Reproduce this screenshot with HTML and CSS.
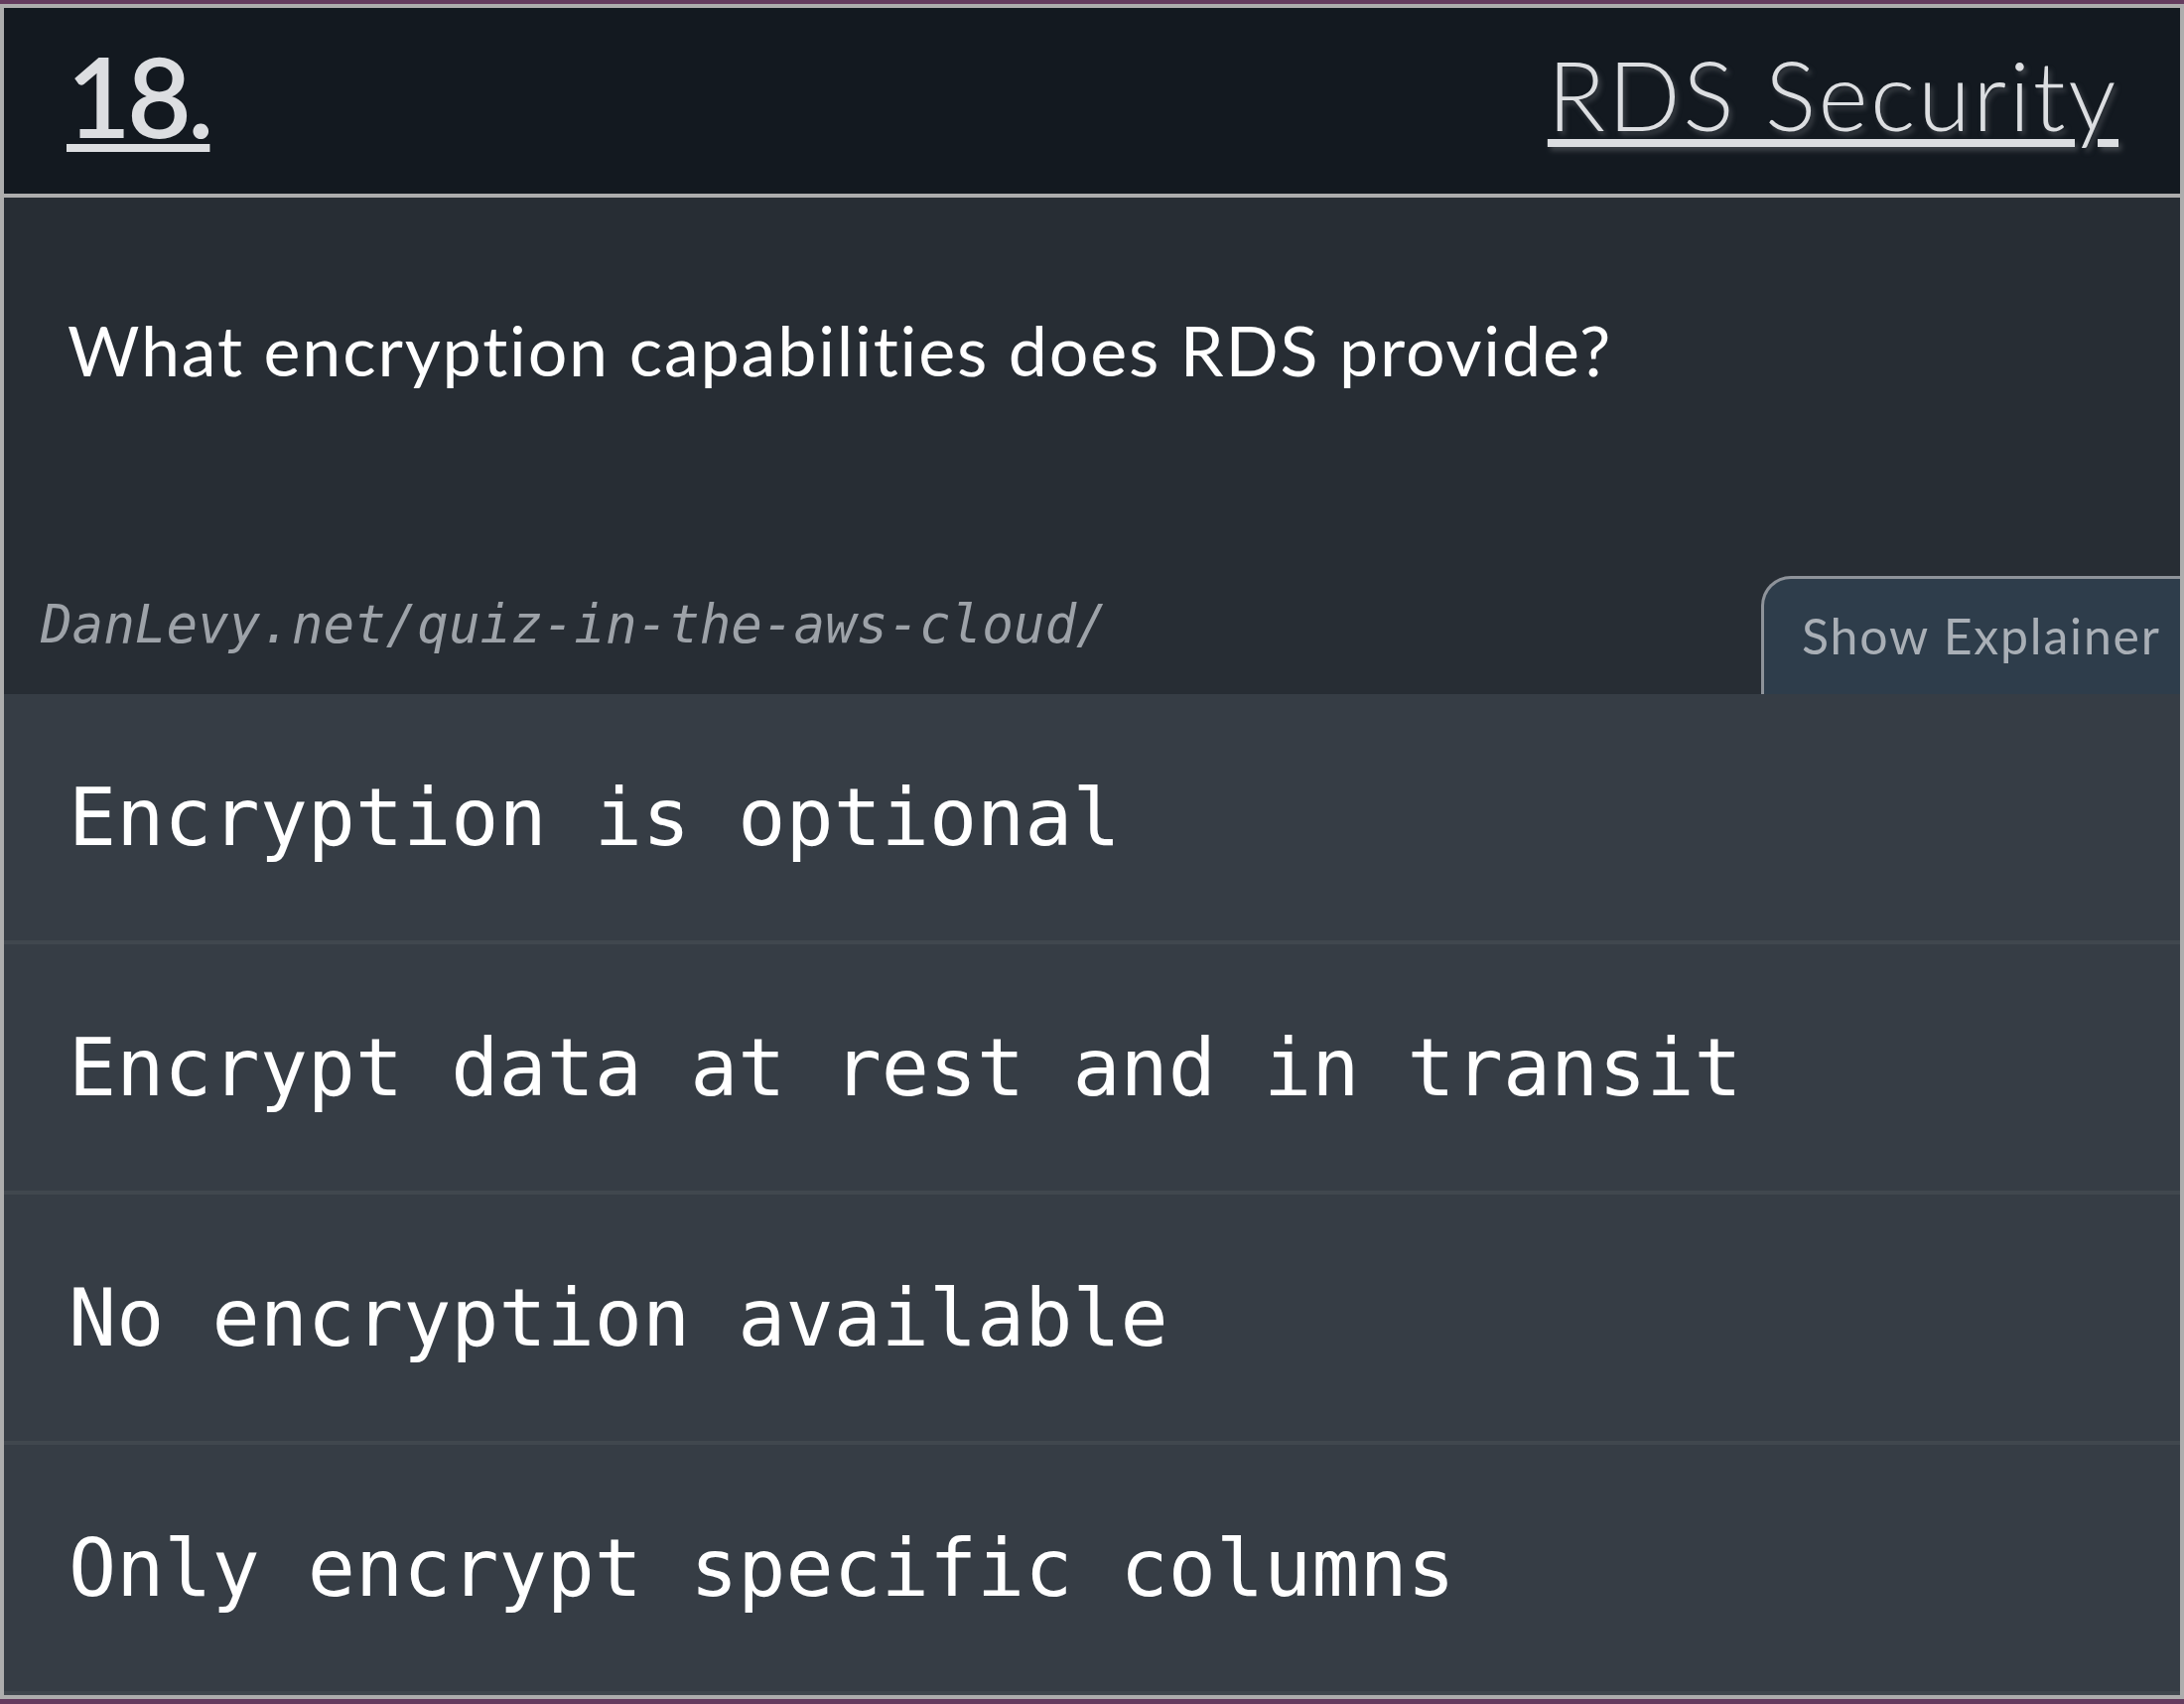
FILE: index.html
```html
<!DOCTYPE html>
<html lang="en">
<head>
<meta charset="utf-8">
<title>RDS Security</title>
<link rel="stylesheet" href="styles.css">
</head>
<body>
<div class="card">
  <header class="card-header">
    <a class="qnum" href="#">18.</a>
    <a class="qtitle" href="#">RDS Security</a>
  </header>
  <section class="question-area">
    <p class="question">What encryption capabilities does RDS provide?</p>
    <div class="question-footer">
      <span class="source">DanLevy.net/quiz-in-the-aws-cloud/</span>
      <button class="explainer-btn" type="button">Show Explainer</button>
    </div>
  </section>
  <ul class="options">
    <li class="option">Encryption is optional</li>
    <li class="option">Encrypt data at rest and in transit</li>
    <li class="option">No encryption available</li>
    <li class="option">Only encrypt specific columns</li>
  </ul>
</div>
</body>
</html>
```
FILE: styles.css
```css
html, body {
  margin: 0;
  padding: 0;
}
body {
  background: #643b5e;
  padding-top: 4px;
  height: 1716px;
  box-sizing: border-box;
  font-family: "Lato", "Noto Sans", sans-serif;
  font-variant-ligatures: none;
}
.card {
  border: 4px solid #adadad;
  background: #363d45;
}
.card-header {
  background: #131920;
  height: 187px;
  border-bottom: 4px solid #adadad;
  display: flex;
  justify-content: space-between;
  align-items: flex-start;
  padding: 0 62px 0 63px;
}
.card-header a {
  color: #dcdee1;
  text-decoration: underline;
  text-decoration-thickness: 8px;
}
.qnum {
  font-weight: 600;
  font-size: 112px;
  line-height: 1;
  letter-spacing: -4px;
  margin-top: 32px;
  text-underline-offset: 6px;
}
.qtitle {
  font-weight: 300;
  font-size: 96px;
  line-height: 1;
  letter-spacing: 2.6px;
  margin-top: 39px;
  text-underline-offset: 8px;
  text-shadow: 3px 4px 5px #3c4147;
}
.question-area {
  background: #272d34;
  height: 500px;
  display: flex;
  flex-direction: column;
}
.question {
  margin: 0;
  padding: 111px 62px 0 64px;
  color: #ffffff;
  font-size: 70px;
  line-height: 84px;
  font-weight: 400;
  letter-spacing: 1.8px;
}
.question-footer {
  margin-top: auto;
  display: flex;
  justify-content: space-between;
  align-items: flex-end;
}
.source {
  font-family: "DejaVu Sans Mono", "Liberation Mono", monospace;
  font-style: italic;
  font-size: 52.5px;
  line-height: 64px;
  color: #9da2a8;
  padding-left: 37px;
  margin-bottom: 38px;
}
.explainer-btn {
  font-family: "Lato", "Noto Sans", sans-serif;
  font-variant-ligatures: none;
  font-size: 50px;
  line-height: 60px;
  letter-spacing: 1.8px;
  color: #a9afb6;
  background: #2e3d4b;
  border: 3px solid #8e939a;
  border-right: 0;
  border-bottom: 0;
  border-top-left-radius: 30px;
  padding: 27px 10px 29px 38px;
  width: 422px;
  text-align: left;
  margin: 0;
  white-space: nowrap;
}
.options {
  list-style: none;
  margin: 0;
  padding: 0;
}
.option {
  height: 248px;
  border-bottom: 4px solid #40474e;
  display: flex;
  align-items: center;
  padding-left: 65px;
  font-family: "DejaVu Sans Mono", "Liberation Mono", monospace;
  font-size: 80px;
  color: #ffffff;
  background: #363d45;
}
```
